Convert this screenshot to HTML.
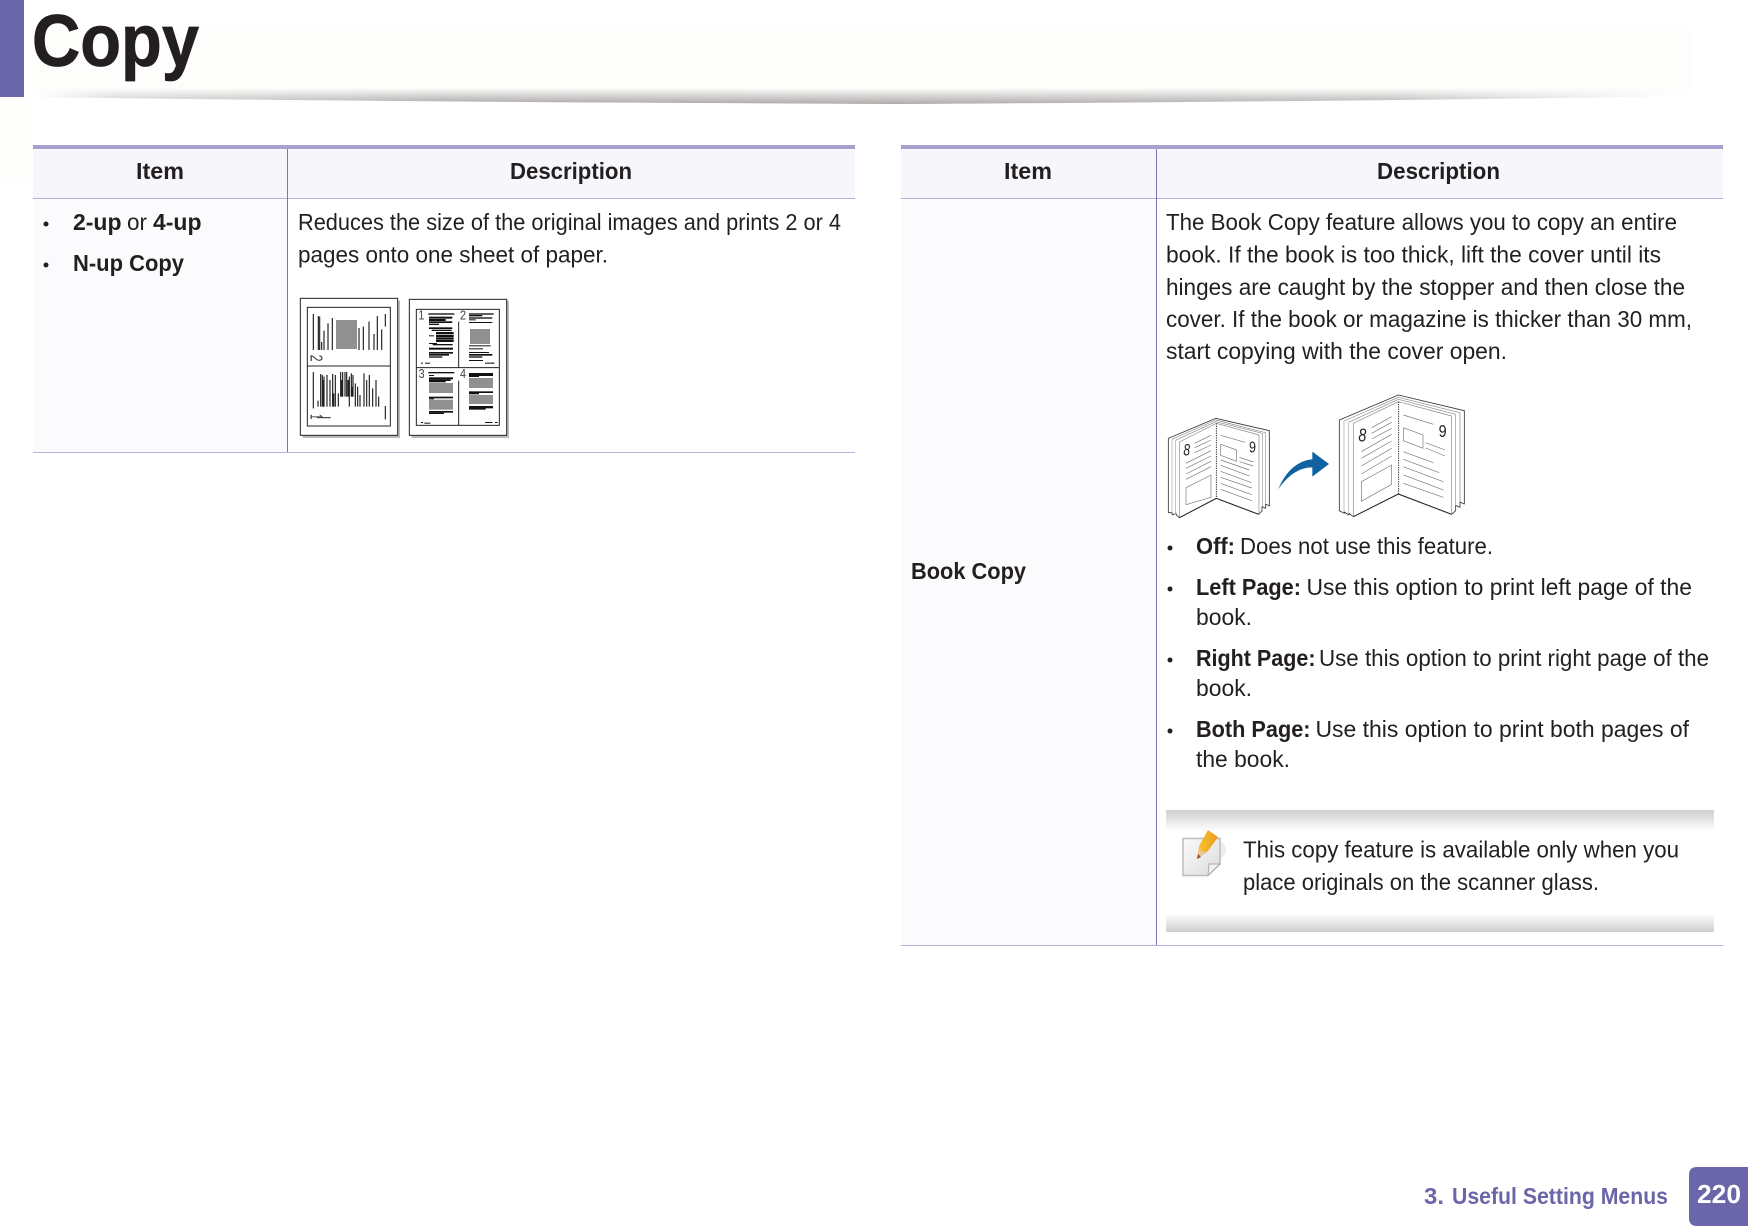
<!DOCTYPE html>
<html><head><meta charset="utf-8"><title>Copy</title>
<style>
html,body{margin:0;padding:0;background:#fff;width:1748px;height:1226px;overflow:hidden}
svg{display:block}
text{font-family:"Liberation Sans",sans-serif;fill:#231f20;font-size:23px}
.b{font-weight:bold}
.h{font-weight:bold;font-size:23px}
</style></head><body>
<svg xmlns="http://www.w3.org/2000/svg" width="1748" height="1226" viewBox="0 0 1748 1226">
<defs>
<linearGradient id="sv" x1="0" y1="0" x2="0" y2="1"><stop offset="0" stop-color="#fdfdfb"/><stop offset="1" stop-color="#aaa6a6"/></linearGradient>
<linearGradient id="fade"><stop offset="0" stop-color="#000"/><stop offset=".05" stop-color="#999"/><stop offset=".25" stop-color="#fff"/><stop offset=".82" stop-color="#ddd"/><stop offset="1" stop-color="#000"/></linearGradient>
<mask id="m" maskUnits="userSpaceOnUse" x="32" y="80" width="1660" height="30"><rect x="32" y="80" width="1660" height="30" fill="url(#fade)"/></mask>
<linearGradient id="bt" x1="0" y1="0" x2="0" y2="1"><stop offset="0" stop-color="#cfcfcf"/><stop offset="1" stop-color="#fff"/></linearGradient>
<linearGradient id="bb" x1="0" y1="0" x2="0" y2="1"><stop offset="0" stop-color="#fff"/><stop offset="1" stop-color="#cfcfcf"/></linearGradient>
<linearGradient id="pg" x1="0" y1="0" x2="1" y2="1"><stop offset="0" stop-color="#fbfbfb"/><stop offset="1" stop-color="#dcdcdc"/></linearGradient>
<linearGradient id="pc" x1="0" y1="0" x2="1" y2="0"><stop offset="0" stop-color="#f9c531"/><stop offset="1" stop-color="#ec9a1c"/></linearGradient>
</defs>

<!-- header -->
<rect x="32" y="30" width="1660" height="60" fill="#fdfdfb"/>
<rect x="0" y="97" width="32" height="84" fill="#fefefd"/>
<rect x="0" y="0" width="24" height="97" fill="#6b65a9"/>
<path d="M32 88H1690L1690 96Q1400 101 900 104Q400 102 32 97Z" fill="url(#sv)" mask="url(#m)"/>
<text x="32" y="66" class="b" style="font-size:73px;stroke:#231f20;stroke-width:.8" textLength="167" lengthAdjust="spacingAndGlyphs">Copy</text>

<!-- left table -->
<rect x="33" y="149" width="822" height="49" fill="#f6f6fb"/>
<rect x="33" y="199" width="254" height="253" fill="#fbfbfe"/>
<rect x="33" y="145" width="822" height="4" fill="#a6a0cd"/>
<rect x="33" y="198" width="822" height="1" fill="#b5b1da"/>
<rect x="33" y="452" width="822" height="1" fill="#b5b1da"/>
<rect x="287" y="149" width="1" height="303" fill="#7a74b8"/>
<text x="136" y="179" class="h" textLength="48" lengthAdjust="spacingAndGlyphs">Item</text>
<text x="510" y="179" class="h" textLength="122" lengthAdjust="spacingAndGlyphs">Description</text>
<circle cx="46" cy="224" r="2.5" fill="#231f20"/>
<circle cx="46" cy="265" r="2.5" fill="#231f20"/>
<text x="73" y="230" class="b" textLength="48.5" lengthAdjust="spacingAndGlyphs">2-up</text>
<text x="127" y="230" textLength="20" lengthAdjust="spacingAndGlyphs">or</text>
<text x="153" y="230" class="b" textLength="48.5" lengthAdjust="spacingAndGlyphs">4-up</text>
<text x="73" y="271" class="b" textLength="111" lengthAdjust="spacingAndGlyphs">N-up Copy</text>
<text x="298" y="230" textLength="543" lengthAdjust="spacingAndGlyphs">Reduces the size of the original images and prints 2 or 4</text>
<text x="298" y="262.5" textLength="310" lengthAdjust="spacingAndGlyphs">pages onto one sheet of paper.</text>

<!-- 2-up / 4-up image -->
<g transform="translate(280,280) scale(.33333)">
<rect x="68" y="62" width="292" height="412" fill="#bbb"/>
<rect x="395" y="62" width="292" height="412" fill="#bbb"/>
<rect x="61" y="55" width="292" height="411" fill="#fff" stroke="#222" stroke-width="3"/>
<rect x="388" y="58" width="292" height="408" fill="#fff" stroke="#222" stroke-width="3"/>
<rect x="82" y="82" width="249" height="356" fill="none" stroke="#222" stroke-width="3"/>
<path d="M82 258H331" stroke="#222" stroke-width="3"/>
<rect x="168" y="120" width="63" height="87" fill="#909090"/>
<path stroke="#222" stroke-width="3.5" fill="none" d="M100 102V210M115 108V210M119 110V210M125 186V210M132 152V210M144 130V210M157 114V210M237 144V210M250 140V210M267 125V210M282 162V210M292 108V210M305 148V210M316 102V140"/>
<path stroke="#222" stroke-width="3.5" fill="none" d="M100 276V385M114 362V380M122 282V380M127 285V380M132 290V380M141 285V380M150 300V380M158 282V380M166 285V380M175 340V380M182 276V350M188 276V350M195 276V350M200 276V350M208 290V380M214 280V350M219 285V350M226 310V380M233 320V380M240 345V380M252 280V380M260 300V380M268 285V380M278 325V380M288 300V380M296 350V380M316 378V418"/>
<path stroke="#222" stroke-width="6" fill="none" d="M130 300V380M160 340V380M185 300V350M205 300V350M216 320V350"/>
<path stroke="#222" stroke-width="3" d="M110 413H152"/>
<text transform="translate(92,224) rotate(90)" style="font-size:52px;fill:#444" textLength="21" lengthAdjust="spacingAndGlyphs">2</text>
<text transform="translate(92,402) rotate(90)" style="font-size:52px;fill:#444" textLength="16" lengthAdjust="spacingAndGlyphs">1</text>

<rect x="409" y="88" width="249" height="348" fill="none" stroke="#222" stroke-width="3"/>
<path d="M409 263H658M536 125V262M536 302V436" stroke="#222" stroke-width="3" fill="none"/>
<text x="415" y="119" style="font-size:40px;fill:#444" textLength="18" lengthAdjust="spacingAndGlyphs">1</text>
<text x="540" y="119" style="font-size:40px;fill:#444" textLength="18" lengthAdjust="spacingAndGlyphs">2</text>
<text x="416" y="294" style="font-size:40px;fill:#444" textLength="18" lengthAdjust="spacingAndGlyphs">3</text>
<text x="540" y="294" style="font-size:40px;fill:#444" textLength="18" lengthAdjust="spacingAndGlyphs">4</text>
<g fill="#111">
<rect x="445" y="100" width="78" height="4"/><rect x="447" y="110" width="70" height="6"/><rect x="447" y="117" width="50" height="6"/><rect x="447" y="124" width="70" height="5"/><rect x="447" y="131" width="30" height="4"/><rect x="447" y="142" width="70" height="5"/><rect x="455" y="149" width="60" height="4"/><rect x="468" y="156" width="53" height="6"/><rect x="468" y="164" width="53" height="7"/><rect x="447" y="166" width="15" height="3"/><rect x="468" y="172" width="53" height="6"/><rect x="468" y="179" width="53" height="7"/><rect x="447" y="189" width="24" height="3"/><rect x="458" y="192" width="60" height="4"/><rect x="447" y="203" width="72" height="6"/><rect x="447" y="216" width="72" height="5"/><rect x="447" y="222" width="60" height="5"/><rect x="447" y="229" width="40" height="4"/><rect x="423" y="248" width="6" height="3"/><rect x="435" y="248" width="15" height="3"/>
<rect x="567" y="100" width="74" height="4"/><rect x="567" y="105" width="40" height="4"/><rect x="567" y="112" width="70" height="4"/><rect x="567" y="118" width="20" height="3"/><rect x="567" y="126" width="70" height="3"/><rect x="567" y="196" width="65" height="3"/><rect x="567" y="205" width="42" height="3"/><rect x="567" y="216" width="60" height="3"/><rect x="567" y="222" width="70" height="5"/><rect x="567" y="229" width="40" height="4"/><rect x="567" y="240" width="42" height="3"/><rect x="615" y="248" width="26" height="3"/><rect x="635" y="248" width="8" height="3"/>
<rect x="445" y="276" width="78" height="4"/><rect x="447" y="285" width="15" height="3"/><rect x="447" y="292" width="72" height="6"/><rect x="447" y="298" width="65" height="5"/><rect x="447" y="303" width="50" height="4"/><rect x="447" y="350" width="72" height="5"/><rect x="447" y="355" width="15" height="3"/><rect x="447" y="393" width="72" height="5"/><rect x="447" y="398" width="45" height="4"/><rect x="423" y="426" width="6" height="3"/><rect x="433" y="428" width="18" height="3"/>
<rect x="567" y="279" width="72" height="9"/><rect x="567" y="287" width="30" height="4"/><rect x="567" y="334" width="72" height="5"/><rect x="567" y="339" width="30" height="4"/><rect x="567" y="378" width="72" height="7"/><rect x="567" y="384" width="50" height="5"/><rect x="615" y="426" width="22" height="3"/><rect x="645" y="426" width="8" height="3"/>
</g>
<g fill="#909090">
<rect x="570" y="147" width="60" height="45"/><rect x="447" y="309" width="72" height="30"/><rect x="447" y="359" width="72" height="30"/><rect x="567" y="294" width="72" height="30"/><rect x="567" y="345" width="72" height="27"/>
</g>
</g>

<!-- right table -->
<rect x="901" y="149" width="822" height="49" fill="#f6f6fb"/>
<rect x="901" y="199" width="255" height="746" fill="#fbfbfe"/>
<rect x="901" y="145" width="822" height="4" fill="#a6a0cd"/>
<rect x="901" y="198" width="822" height="1" fill="#b5b1da"/>
<rect x="901" y="945" width="822" height="1" fill="#b5b1da"/>
<rect x="1156" y="149" width="1" height="796" fill="#7a74b8"/>
<text x="1004" y="179" class="h" textLength="48" lengthAdjust="spacingAndGlyphs">Item</text>
<text x="1377" y="179" class="h" textLength="123" lengthAdjust="spacingAndGlyphs">Description</text>
<text x="911" y="579" class="b" textLength="115" lengthAdjust="spacingAndGlyphs">Book Copy</text>

<text x="1166" y="230" textLength="511" lengthAdjust="spacingAndGlyphs">The Book Copy feature allows you to copy an entire</text>
<text x="1166" y="262.5" textLength="495" lengthAdjust="spacingAndGlyphs">book. If the book is too thick, lift the cover until its</text>
<text x="1166" y="295" textLength="519" lengthAdjust="spacingAndGlyphs">hinges are caught by the stopper and then close the</text>
<text x="1166" y="327" textLength="526" lengthAdjust="spacingAndGlyphs">cover. If the book or magazine is thicker than 30 mm,</text>
<text x="1166" y="359" textLength="341" lengthAdjust="spacingAndGlyphs">start copying with the cover open.</text>

<!-- books -->
<g transform="translate(1150,380) scale(.33333)" fill="#fff" stroke-linejoin="round">
<path d="M55 175L197 115L358 152V378L347 372V385L336 380V393L326 403L199 355L88 413L79 405L78 400L67 405L66 398L55 398Z" stroke="#333" stroke-width="2.5"/>
<path d="M66 178L197 120L347 158V372M77 181L197 125L337 160V380" fill="none" stroke="#888" stroke-width="2"/>
<path d="M66 178V398M77 181V402M337 160V380M347 158V372" fill="none" stroke="#aaa" stroke-width="2"/>
<path d="M88 186L199 130L327 165V403L199 355L88 413Z" stroke="#888" stroke-width="2"/>
<path d="M88 413L199 355L326 403" fill="none" stroke="#222" stroke-width="3"/>
<path d="M199 130V355" stroke="#111" stroke-width="2.5" stroke-dasharray="4 3"/>
<g fill="none" stroke="#777" stroke-width="2">
<path d="M134 190L183 166M134 203L183 180M134 218L183 195M108 250L183 212M108 265L183 228M108 282L183 244M108 298L183 260M108 323L183 285V352L108 374Z"/>
<path d="M212 166L285 187M268 232L310 246M268 245L310 258M212 193L260 210V244L212 226ZM212 240L298 270M212 256L298 288M212 274L305 308M212 292L305 324M212 310L305 344M212 328L305 362"/>
</g>
<text x="100" y="226" style="font-size:50px;font-style:italic;fill:#222;stroke:none" textLength="20" lengthAdjust="spacingAndGlyphs">8</text>
<text x="297" y="218" style="font-size:48px;fill:#222;stroke:none" textLength="21" lengthAdjust="spacingAndGlyphs">9</text>

<path d="M568 120L745 45L943 92V372L930 366V382L917 376V392L905 403L745 342L610 410L597 400V405L583 396V400L568 392Z" stroke="#333" stroke-width="2.5"/>
<path d="M582 123L745 52L930 98V366M596 127L745 58L917 103V376" fill="none" stroke="#888" stroke-width="2"/>
<path d="M582 123V396M596 127V402M917 103V376M930 98V366" fill="none" stroke="#aaa" stroke-width="2"/>
<path d="M610 130L745 65L905 108V403L745 342L610 410Z" stroke="#888" stroke-width="2"/>
<path d="M610 410L745 342L905 403" fill="none" stroke="#222" stroke-width="3"/>
<path d="M746 65V342" stroke="#111" stroke-width="2.5" stroke-dasharray="4 3"/>
<g fill="none" stroke="#777" stroke-width="2">
<path d="M665 143L725 110M665 160L725 127M665 177L725 145M634 215L725 163M634 235L725 183M634 258L725 205M634 282L725 228M634 305L725 255V313L634 364Z"/>
<path d="M760 105L850 133M827 188L885 210M827 204L885 228M760 143L819 165V205L760 182ZM760 215L850 248M760 238L868 278M760 260L880 305M760 285L880 330M760 310L880 352"/>
</g>
<text x="625" y="184" style="font-size:56px;font-style:italic;fill:#222;stroke:none" textLength="24" lengthAdjust="spacingAndGlyphs">8</text>
<text x="866" y="171" style="font-size:54px;fill:#222;stroke:none" textLength="24" lengthAdjust="spacingAndGlyphs">9</text>
<path d="M385 328C405 275 445 240 487 238V215L537 252L487 290V262C445 262 410 290 385 328Z" fill="#0e62a0"/>
</g>

<!-- bullets -->
<circle cx="1170" cy="548" r="2.5" fill="#231f20"/>
<circle cx="1170" cy="589" r="2.5" fill="#231f20"/>
<circle cx="1170" cy="660" r="2.5" fill="#231f20"/>
<circle cx="1170" cy="731" r="2.5" fill="#231f20"/>
<text x="1196" y="554" class="b" textLength="39" lengthAdjust="spacingAndGlyphs">Off:</text>
<text x="1240" y="554" textLength="253" lengthAdjust="spacingAndGlyphs">Does not use this feature.</text>
<text x="1196" y="595" class="b" textLength="105" lengthAdjust="spacingAndGlyphs">Left Page:</text>
<text x="1306.5" y="595" textLength="385.5" lengthAdjust="spacingAndGlyphs">Use this option to print left page of the</text>
<text x="1196" y="625" textLength="56" lengthAdjust="spacingAndGlyphs">book.</text>
<text x="1196" y="666" class="b" textLength="119.5" lengthAdjust="spacingAndGlyphs">Right Page:</text>
<text x="1319" y="666" textLength="390" lengthAdjust="spacingAndGlyphs">Use this option to print right page of the</text>
<text x="1196" y="696" textLength="56" lengthAdjust="spacingAndGlyphs">book.</text>
<text x="1196" y="737" class="b" textLength="114.5" lengthAdjust="spacingAndGlyphs">Both Page:</text>
<text x="1315.5" y="737" textLength="373.5" lengthAdjust="spacingAndGlyphs">Use this option to print both pages of</text>
<text x="1196" y="767" textLength="94" lengthAdjust="spacingAndGlyphs">the book.</text>

<!-- note -->
<rect x="1166" y="810" width="548" height="21" fill="url(#bt)"/>
<rect x="1166" y="913" width="548" height="19" fill="url(#bb)"/>
<g>
<circle cx="1217" cy="850" r="9" fill="#ececec"/>
<path d="M1183 838.500H1220V864L1208 875.500H1183Z" fill="url(#pg)" stroke="#bcbcbc" stroke-width="1.500"/>
<path d="M1208 875.500L1209 864H1220Z" fill="#f0f0f0" stroke="#aaa"/>
<path d="M1197 859L1199 846L1208 830L1218 837L1208 851Z" fill="url(#pc)"/>
<path d="M1197 859L1199 849L1206 853Z" fill="#e8c79a"/>
<path d="M1197 859L1198 854L1201 857Z" fill="#a5491e"/>
</g>
<text x="1243" y="857.500" textLength="436" lengthAdjust="spacingAndGlyphs">This copy feature is available only when you</text>
<text x="1243" y="890" textLength="356" lengthAdjust="spacingAndGlyphs">place originals on the scanner glass.</text>

<!-- footer -->
<text x="1424" y="1204" class="b" style="fill:#6b65a9" textLength="20" lengthAdjust="spacingAndGlyphs">3.</text>
<text x="1452" y="1204" class="b" style="fill:#6b65a9" textLength="216" lengthAdjust="spacingAndGlyphs">Useful Setting Menus</text>
<path d="M1697 1167H1748V1226H1697Q1689 1226 1689 1218V1175Q1689 1167 1697 1167Z" fill="#6b65a9"/>
<text x="1697" y="1203" class="b" style="fill:#fff;font-size:26px" textLength="44" lengthAdjust="spacingAndGlyphs">220</text>
</svg>
</body></html>
